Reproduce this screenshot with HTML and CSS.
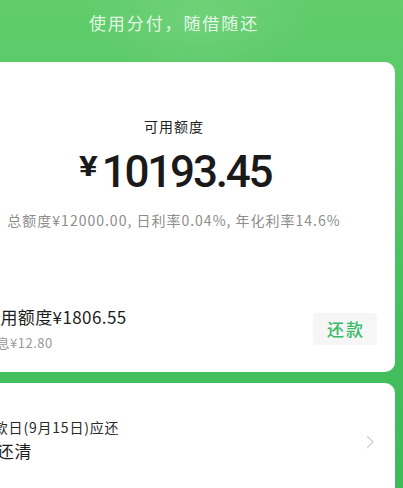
FILE: index.html
```html
<!DOCTYPE html>
<html lang="zh-CN">
<head>
<meta charset="utf-8">
<title>分付</title>
<link rel="stylesheet" href="styles.css">
</head>
<body>
<div class="screen">
  <header class="hero">
    <p class="tagline">使用分付，随借随还</p>
  </header>
  <section class="card card-main">
    <div class="quota">
      <div class="quota-label">可用额度</div>
      <div class="quota-amount"><span class="yen">¥</span><span class="num">10193.45</span></div>
      <div class="quota-info">总额度¥12000.00, 日利率0.04%, 年化利率14.6%</div>
    </div>
    <div class="used-row">
      <div class="used-text">
        <div class="used-amount">已用额度¥1806.55</div>
        <div class="used-interest">利息¥12.80</div>
      </div>
      <button class="repay-btn" type="button">还款</button>
    </div>
  </section>
  <section class="card card-bill">
    <div class="bill-text">
      <div class="bill-date">还款日(9月15日)应还</div>
      <div class="bill-status">已还清</div>
    </div>
    <svg class="chevron" width="9" height="14" viewBox="0 0 9 14" aria-hidden="true">
      <path d="M1.5 1.5 L7 7 L1.5 12.5" fill="none" stroke="#d2d2d2" stroke-width="1.4" stroke-linecap="round" stroke-linejoin="round"/>
    </svg>
  </section>
</div>
</body>
</html>
```

FILE: styles.css
```css
html, body {
  margin: 0;
  padding: 0;
  height: 100%;
  overflow: hidden;
}
body {
  font-family: "Noto Sans CJK SC", "Noto Sans", sans-serif;
  background:
    radial-gradient(ellipse 160px 90px at 200px 20px, rgba(255,255,255,0.10), rgba(255,255,255,0) 70%),
    linear-gradient(180deg, #61cd6b 0px, #55c765 150px, #44bf5d 330px, #3dbb5a 488px);
  color: #1c1c1c;
}
.screen {
  width: 442px;
  margin-left: -47px;
}
.hero {
  height: 62px;
  display: flex;
  justify-content: center;
}
.tagline {
  margin: 11px 0 0;
  font-size: 17px;
  line-height: 24px;
  letter-spacing: 1.9px;
  color: rgba(255,255,255,0.84);
}
.card {
  background: #ffffff;
  border-radius: 10px;
}
.card-main {
  height: 310px;
  display: flex;
  flex-direction: column;
}
.quota {
  display: flex;
  flex-direction: column;
  align-items: center;
  padding-top: 54px;
}
.quota-label {
  font-size: 14px;
  line-height: 20px;
  letter-spacing: 1px;
  color: #222;
}
.quota-amount {
  display: flex;
  align-items: flex-start;
  margin-top: 16px;
  height: 40px;
}
.yen {
  font-family: Roboto, "Noto Sans", sans-serif;
  font-size: 28px;
  font-weight: 700;
  line-height: 30px;
  margin-right: 6px;
  margin-top: 0;
  margin-left: 4px;
  transform: scaleX(1.25);
  color: #1a1a1a;
}
.num {
  font-family: Roboto, "Noto Sans", sans-serif;
  font-size: 44px;
  font-weight: 500;
  line-height: 40px;
  letter-spacing: -2.2px;
  color: #1a1a1a;
}
.quota-info {
  margin-top: 19px;
  font-size: 14px;
  line-height: 18px;
  letter-spacing: 1px;
  color: #8d8d8d;
}
.used-row {
  display: flex;
  align-items: center;
  justify-content: space-between;
  padding: 0 18px 0 30px;
  margin-top: 76px;
}
.used-amount {
  font-size: 17px;
  line-height: 24px;
  letter-spacing: 0.4px;
  color: #1e1e1e;
}
.used-interest {
  margin-top: 5px;
  font-family: "Noto Sans CJK SC", sans-serif;
  font-size: 13px;
  line-height: 18px;
  letter-spacing: 0.5px;
  color: #9a9a9a;
}
.repay-btn {
  width: 64px;
  height: 32px;
  border: none;
  border-radius: 4px;
  background: #f5f6f5;
  color: #38ba68;
  font-family: "Noto Sans CJK SC", sans-serif;
  font-size: 17px;
  font-weight: 500;
  letter-spacing: 2px;
  padding: 0 0 0 2px;
}
.card-bill {
  margin-top: 11px;
  height: 130px;
  display: flex;
  align-items: flex-start;
  justify-content: space-between;
  padding: 0 20px 0 26px;
}
.bill-text {
  padding-top: 34px;
}
.bill-date {
  font-size: 14px;
  line-height: 20px;
  letter-spacing: 0.8px;
  color: #2a2a2a;
}
.bill-status {
  margin-top: 2px;
  font-size: 17px;
  line-height: 24px;
  letter-spacing: 0.8px;
  color: #1e1e1e;
}
.chevron {
  margin-top: 52px;
}
```
